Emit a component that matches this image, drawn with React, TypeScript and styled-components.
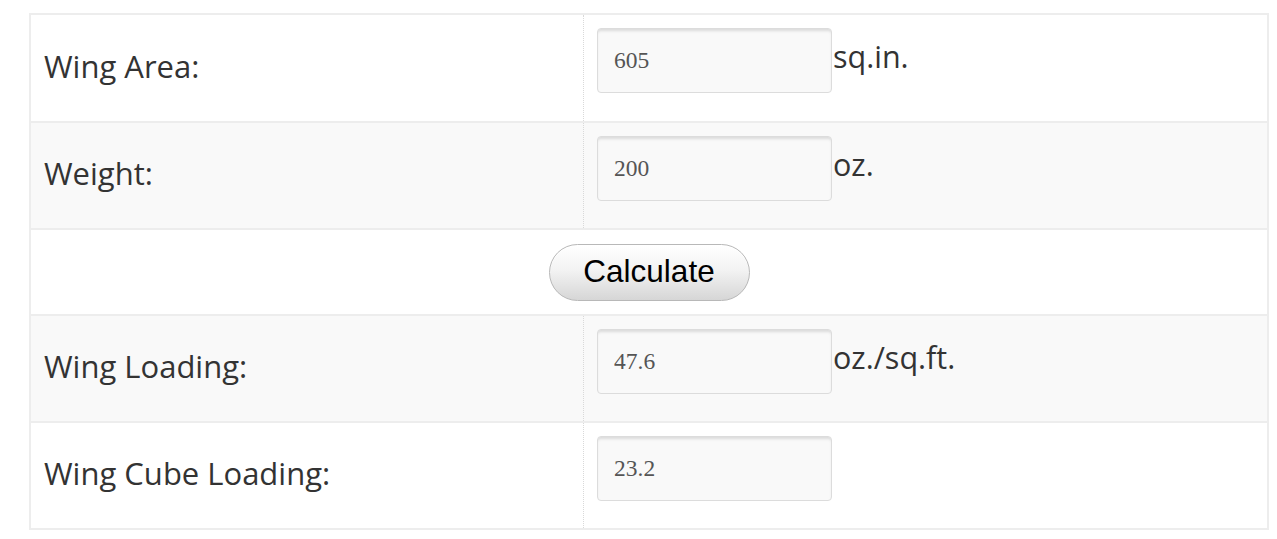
import { FunctionComponent } from 'react';
import styled, { createGlobalStyle } from 'styled-components';

const GlobalStyle = createGlobalStyle`
  html, body {
    margin: 0;
    padding: 0;
    background: #fff;
  }
  * {
    box-sizing: border-box;
  }
`;

interface Field {
  label: string;
  value: string;
  unit?: string;
}

const inputs: Field[] = [
  { label: 'Wing Area:', value: '605', unit: 'sq.in.' },
  { label: 'Weight:', value: '200', unit: 'oz.' },
];

const results: Field[] = [
  { label: 'Wing Loading:', value: '47.6', unit: 'oz./sq.ft.' },
  { label: 'Wing Cube Loading:', value: '23.2' },
];

const Page = styled.div`
  padding: 13px 8px 9px 29px;
`;

const Table = styled.div`
  width: 1240px;
  border: 2px solid #ededed;
  display: flex;
  flex-direction: column;
`;

const Row = styled.div<{ $striped?: boolean }>`
  display: grid;
  grid-template-columns: 553px 1fr;
  min-height: 107px;
  background: ${(p) => (p.$striped ? '#f9f9f9' : '#fff')};
  border-top: 2px solid #ededed;

  &:first-child {
    border-top: none;
    min-height: 106px;
  }
`;

const ButtonRow = styled.div`
  display: flex;
  align-items: center;
  justify-content: center;
  min-height: 86px;
  border-top: 2px solid #ededed;
  background: #fff;
`;

const LabelCell = styled.div`
  display: flex;
  align-items: center;
  padding: 0 14px 5px 13px;
  border-right: 1px dotted #d9d9d9;
  font-family: 'Open Sans', 'DejaVu Sans', sans-serif;
  font-size: 31px;
  color: #333;
`;

const ValueCell = styled.div`
  display: flex;
  align-items: baseline;
  padding: 13px 13px 0 13px;
`;

const TextInput = styled.input`
  width: 235px;
  height: 65px;
  padding: 0 16px;
  border: 1px solid #dcdcdc;
  border-radius: 4px;
  background: #f9f9f9;
  box-shadow: inset 0 3px 3px -1px rgba(0, 0, 0, 0.12);
  font-family: 'Liberation Serif', 'Times New Roman', serif;
  font-size: 23.5px;
  color: #555;
  outline: none;
`;

const Unit = styled.span`
  margin-left: 1px;
  font-family: 'Open Sans', 'DejaVu Sans', sans-serif;
  font-size: 30.5px;
  color: #333;
`;

const CalcButton = styled.button`
  width: 201px;
  height: 57px;
  border: 1px solid #b8b8b8;
  border-radius: 29px;
  background: linear-gradient(to bottom, #ffffff 0%, #f3f3f3 45%, #d6d6d6 100%);
  box-shadow: inset 0 1px 0 #fff;
  font-family: 'Liberation Sans', Arial, sans-serif;
  font-size: 31.5px;
  color: #000;
  padding: 0 0 2px;
  cursor: pointer;
`;

const FieldRow: FunctionComponent<{ field: Field; striped?: boolean }> = ({ field, striped }) => (
  <Row $striped={striped}>
    <LabelCell>{field.label}</LabelCell>
    <ValueCell>
      <TextInput type="text" defaultValue={field.value} />
      {field.unit && <Unit>{field.unit}</Unit>}
    </ValueCell>
  </Row>
);

const App: FunctionComponent = () => {
  return (
    <Page>
      <GlobalStyle />
      <Table>
        {inputs.map((f, i) => (
          <FieldRow key={f.label} field={f} striped={i % 2 === 1} />
        ))}
        <ButtonRow>
          <CalcButton type="button">Calculate</CalcButton>
        </ButtonRow>
        {results.map((f, i) => (
          <FieldRow key={f.label} field={f} striped={i % 2 === 0} />
        ))}
      </Table>
    </Page>
  );
};

export default App;
